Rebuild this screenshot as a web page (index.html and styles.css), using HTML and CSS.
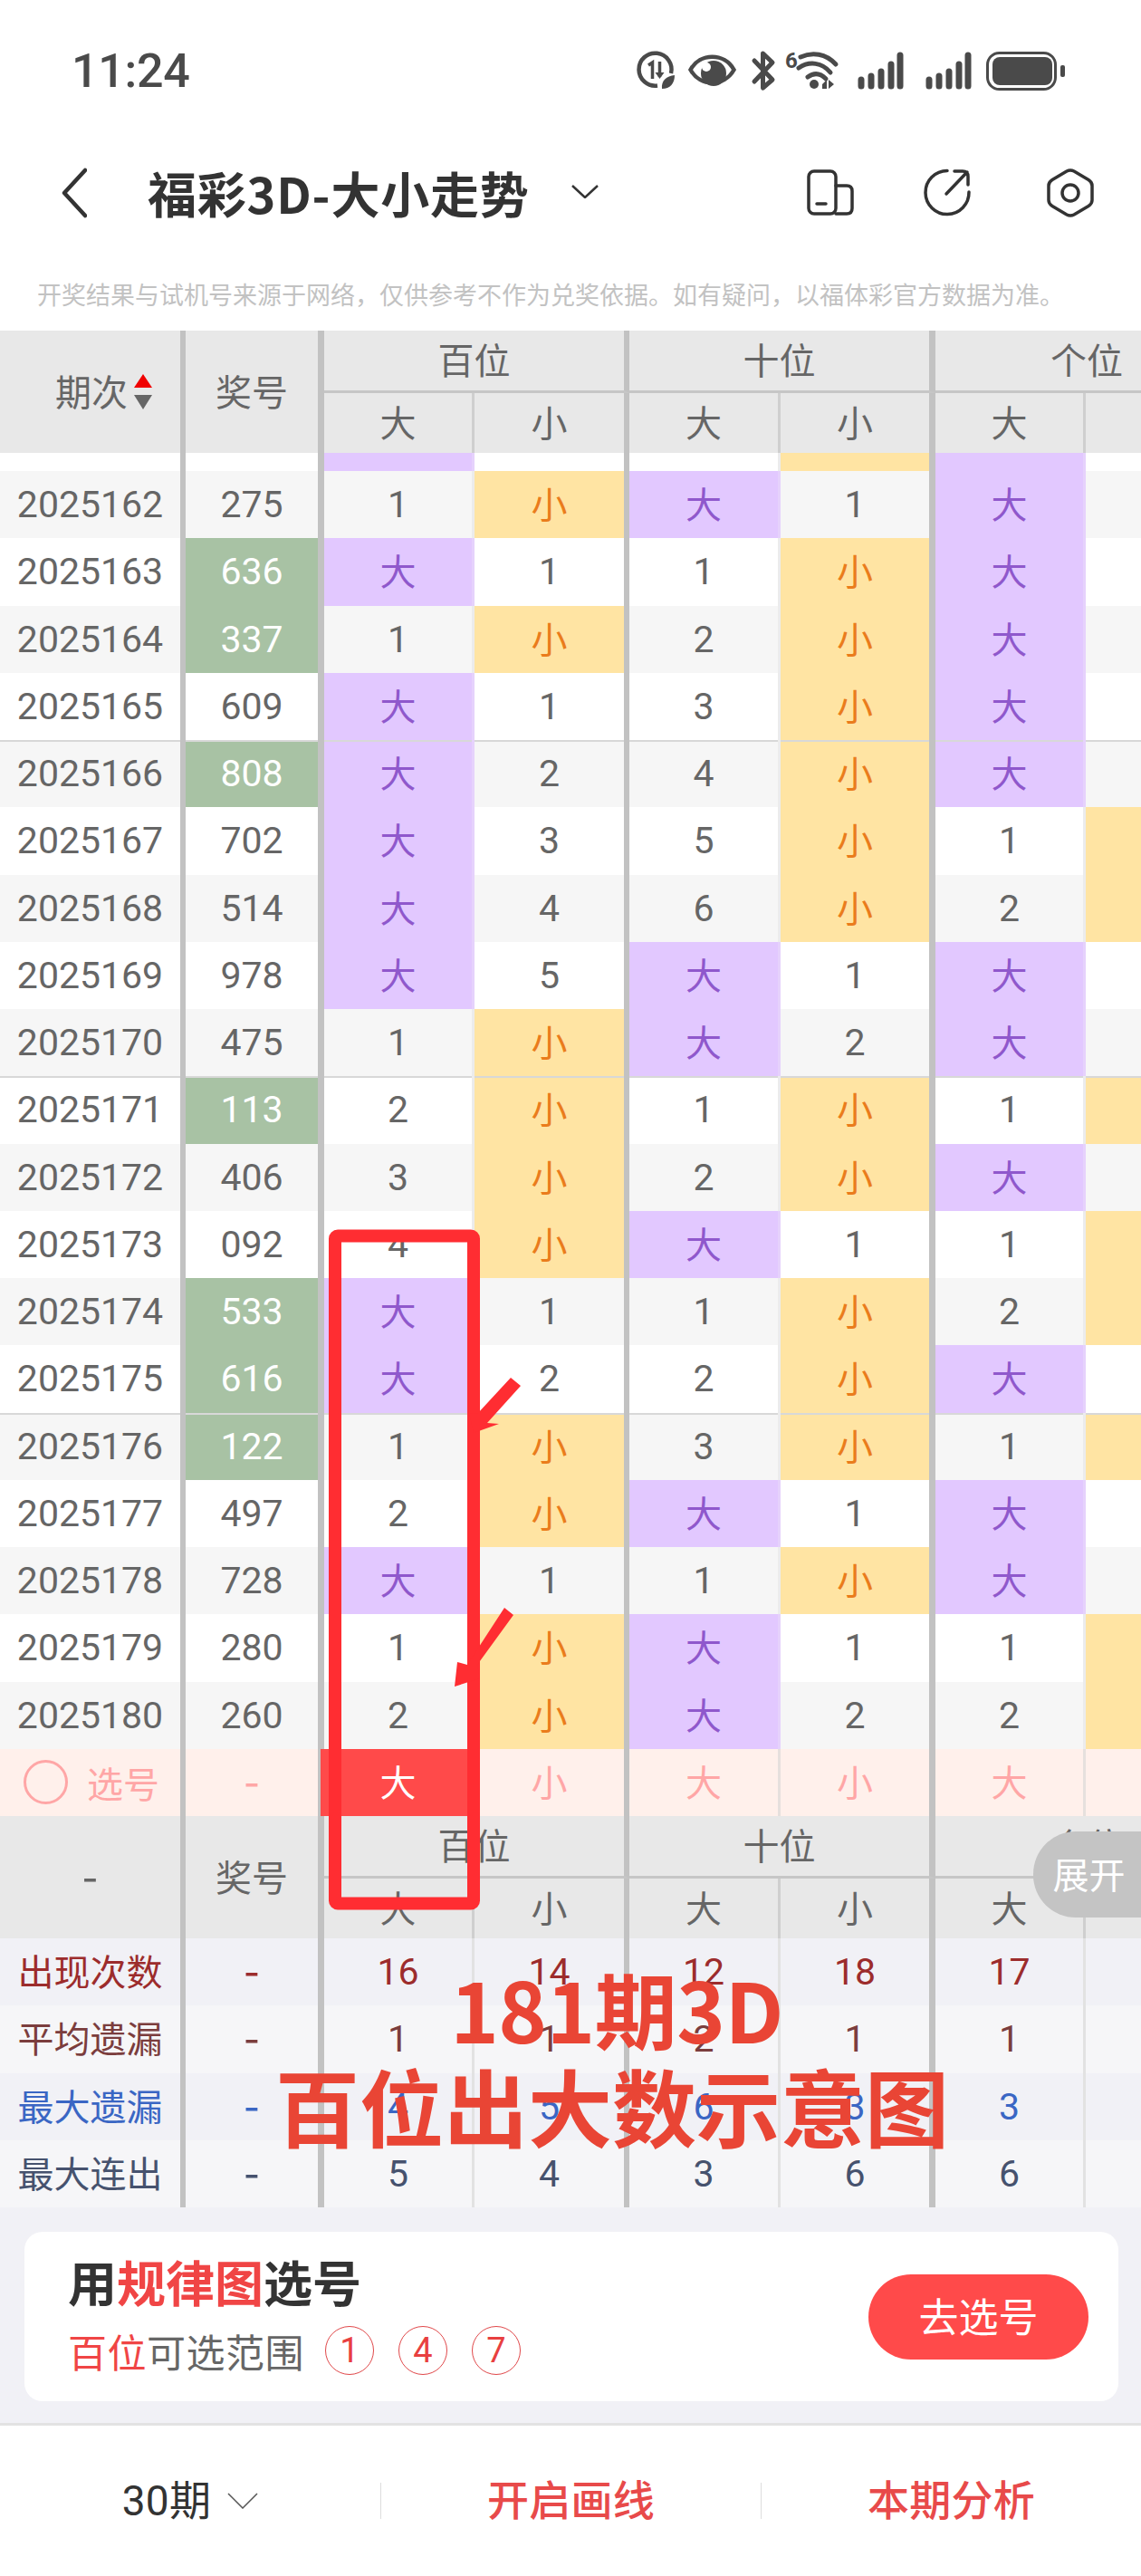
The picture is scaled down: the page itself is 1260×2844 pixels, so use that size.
FILE: index.html
```html
<!DOCTYPE html>
<html lang="zh-CN">
<head>
<meta charset="utf-8">
<title>福彩3D-大小走势</title>
<link rel="stylesheet" href="styles.css">
</head>
<body>
<div class="page">
  <div class="status">
    <span class="time">11:24</span>
    <div class="status-icons">
      <svg width="55" height="55" viewBox="700 50 55 55" class="ic-fill"><path d="M741 81A18 18 0 1 0 726 94.500" fill="none" stroke="#4a4a4a" stroke-width="4.500"/><path d="M716 72l4.500-3V87M728.500 68V85" fill="none" stroke="#4a4a4a" stroke-width="3.500"/><path d="M723.500 80l5 7 5-7z"/><path d="M731 98C730 89 736 84 745 83C745 92 740 98 731 98Z"/></svg>
      <svg width="70" height="55" viewBox="755 50 70 55" class="ic-fill"><path d="M762.500 77C773 58 800 58 810.500 77C800 96 773 96 762.500 77Z" fill="none" stroke="#4a4a4a" stroke-width="4.500"/><circle cx="788" cy="81" r="14"/><circle cx="780" cy="74" r="5" fill="#fff"/></svg>
      <svg width="37" height="55" viewBox="825 50 37 55"><path d="M833 67L853 88L842.500 97V59L853 69L833 90" fill="none" stroke="#4a4a4a" stroke-width="5" stroke-linecap="round" stroke-linejoin="round"/></svg>
      <svg width="78" height="55" viewBox="862 50 78 55" class="ic-fill"><text x="867" y="75" class="wifi-six">6</text><path d="M884 63C897 57 912 59 923 71M882 75C894 67 908 69 917 80M892 85C899 80 906 81 912 87" fill="none" stroke="#4a4a4a" stroke-width="5" stroke-linecap="round"/><circle cx="899" cy="93" r="5"/><path d="M908 98V93L913 88V98ZM915 88V98L921 93Z"/></svg>
      <svg width="75" height="55" viewBox="940 50 75 55"><path d="M951 88V95M962 84V95M973 79V95M984 71V95M994 61V95" stroke="#4a4a4a" stroke-width="7" stroke-linecap="round"/></svg>
      <svg width="70" height="55" viewBox="1015 50 70 55"><path d="M1026 88V95M1037 84V95M1048 79V95M1059 71V95M1069 61V95" stroke="#4a4a4a" stroke-width="7" stroke-linecap="round"/></svg>
      <svg width="95" height="55" viewBox="1085 50 95 55" class="ic-fill"><rect x="1090.500" y="58.500" width="75" height="40" rx="13" fill="none" stroke="#4a4a4a" stroke-width="3"/><rect x="1096" y="63" width="66" height="31" rx="8"/><rect x="1171" y="72" width="5" height="13" rx="2"/></svg>
    </div>
  </div>

  <div class="nav">
    <svg class="back" width="28" height="56" viewBox="0 0 28 56"><path d="M26 3L3 28L26 53" fill="none" stroke="#333" stroke-width="4.500" stroke-linecap="round" stroke-linejoin="round"/></svg>
    <h1 class="title">福彩3D-大小走势</h1>
    <svg class="caret" width="30" height="15" viewBox="0 0 30 15"><path d="M1 1L15 14L29 1" fill="none" stroke="#333" stroke-width="2.500"/></svg>
    <div class="nav-actions">
      <svg width="52" height="52" viewBox="891 187 52 52" class="ic-line"><rect x="893" y="189" width="30" height="47" rx="6"/><path d="M923 205H935Q941 205 941 211V230Q941 236 935 236H923"/><path d="M902 225H912"/></svg>
      <svg width="59" height="54" viewBox="1020 186 59 54" class="ic-line"><path d="M1046 188.500A24 24 0 1 0 1070 212"/><path d="M1045 214L1068 190M1054 189H1063Q1069 189 1069 195V204"/></svg>
      <svg width="52" height="56" viewBox="1156 184 52 56" class="ic-line"><path d="M1178 188Q1182 186 1186 188L1202 197.500Q1206 200 1206 204V220Q1206 224 1202 226.500L1186 236Q1182 238 1178 236L1162 226.500Q1158 224 1158 220V204Q1158 200 1162 197.500Z"/><circle cx="1182" cy="212" r="9"/></svg>
    </div>
  </div>

  <p class="notice">开奖结果与试机号来源于网络，仅供参考不作为兑奖依据。如有疑问，以福体彩官方数据为准。</p>

  <div class="chart">
    <div class="head">
      <div class="hc tall tk6 sort-cell"><span>期次</span><svg width="20" height="39" viewBox="0 0 20 39"><path d="M10 0L20 15H0Z" fill="#f00000"/><path d="M0 23H20L10 39Z" fill="#666"/></svg></div>
      <div class="hc tall tk7">奖号</div>
      <div class="hc grp tk6">百位</div>
      <div class="hc grp tk7">十位</div>
      <div class="hc grp tn">个位</div>
      <div class="hc tn">大</div><div class="hc tk6">小</div>
      <div class="hc tn">大</div><div class="hc tk7">小</div>
      <div class="hc tn">大</div><div class="hc tn">小</div>
    </div>

    <div class="row peek"><span></span><span></span><span class="b">大</span><span></span><span></span><span class="s">小</span><span class="b">大</span><span></span></div>
    <div class="row alt"><span>2025162</span><span>275</span><span>1</span><span class="s">小</span><span class="b">大</span><span>1</span><span class="b">大</span><span></span></div>
    <div class="row"><span>2025163</span><span class="g">636</span><span class="b">大</span><span>1</span><span>1</span><span class="s">小</span><span class="b">大</span><span></span></div>
    <div class="row alt"><span>2025164</span><span class="g">337</span><span>1</span><span class="s">小</span><span>2</span><span class="s">小</span><span class="b">大</span><span></span></div>
    <div class="row"><span>2025165</span><span>609</span><span class="b">大</span><span>1</span><span>3</span><span class="s">小</span><span class="b">大</span><span></span></div>
    <div class="row alt sep"><span>2025166</span><span class="g">808</span><span class="b">大</span><span>2</span><span>4</span><span class="s">小</span><span class="b">大</span><span></span></div>
    <div class="row"><span>2025167</span><span>702</span><span class="b">大</span><span>3</span><span>5</span><span class="s">小</span><span>1</span><span class="s">小</span></div>
    <div class="row alt"><span>2025168</span><span>514</span><span class="b">大</span><span>4</span><span>6</span><span class="s">小</span><span>2</span><span class="s">小</span></div>
    <div class="row"><span>2025169</span><span>978</span><span class="b">大</span><span>5</span><span class="b">大</span><span>1</span><span class="b">大</span><span></span></div>
    <div class="row alt"><span>2025170</span><span>475</span><span>1</span><span class="s">小</span><span class="b">大</span><span>2</span><span class="b">大</span><span></span></div>
    <div class="row sep"><span>2025171</span><span class="g">113</span><span>2</span><span class="s">小</span><span>1</span><span class="s">小</span><span>1</span><span class="s">小</span></div>
    <div class="row alt"><span>2025172</span><span>406</span><span>3</span><span class="s">小</span><span>2</span><span class="s">小</span><span class="b">大</span><span></span></div>
    <div class="row"><span>2025173</span><span>092</span><span>4</span><span class="s">小</span><span class="b">大</span><span>1</span><span>1</span><span class="s">小</span></div>
    <div class="row alt"><span>2025174</span><span class="g">533</span><span class="b">大</span><span>1</span><span>1</span><span class="s">小</span><span>2</span><span class="s">小</span></div>
    <div class="row"><span>2025175</span><span class="g">616</span><span class="b">大</span><span>2</span><span>2</span><span class="s">小</span><span class="b">大</span><span></span></div>
    <div class="row alt sep"><span>2025176</span><span class="g">122</span><span>1</span><span class="s">小</span><span>3</span><span class="s">小</span><span>1</span><span class="s">小</span></div>
    <div class="row"><span>2025177</span><span>497</span><span>2</span><span class="s">小</span><span class="b">大</span><span>1</span><span class="b">大</span><span></span></div>
    <div class="row alt"><span>2025178</span><span>728</span><span class="b">大</span><span>1</span><span>1</span><span class="s">小</span><span class="b">大</span><span></span></div>
    <div class="row"><span>2025179</span><span>280</span><span>1</span><span class="s">小</span><span class="b">大</span><span>1</span><span>1</span><span class="s">小</span></div>
    <div class="row alt"><span>2025180</span><span>260</span><span>2</span><span class="s">小</span><span class="b">大</span><span>2</span><span>2</span><span class="s">小</span></div>

    <div class="row pick-row"><span class="pick-cell"><i class="radio"></i>选号</span><span class="dash">-</span><span class="on">大</span><span class="cj">小</span><span class="cj">大</span><span class="cj">小</span><span class="cj">大</span><span class="cj">小</span></div>

    <div class="head foot">
      <div class="hc tall tk6 dash">-</div>
      <div class="hc tall tk7">奖号</div>
      <div class="hc grp tk6">百位</div>
      <div class="hc grp tk7">十位</div>
      <div class="hc grp tn">个位</div>
      <div class="hc tn">大</div><div class="hc tk6">小</div>
      <div class="hc tn">大</div><div class="hc tk7">小</div>
      <div class="hc tn">大</div><div class="hc tn">小</div>
    </div>
    <div class="expand">展开</div>

    <div class="row stat st1"><span class="cj">出现次数</span><span class="dash">-</span><span>16</span><span>14</span><span>12</span><span>18</span><span>17</span><span></span></div>
    <div class="row stat st2"><span class="cj">平均遗漏</span><span class="dash">-</span><span>1</span><span>1</span><span>2</span><span>1</span><span>1</span><span></span></div>
    <div class="row stat st3"><span class="cj">最大遗漏</span><span class="dash">-</span><span>4</span><span>5</span><span>6</span><span>3</span><span>3</span><span></span></div>
    <div class="row stat st4"><span class="cj">最大连出</span><span class="dash">-</span><span>5</span><span>4</span><span>3</span><span>6</span><span>6</span><span></span></div>
  </div>

  <div class="tray">
    <div class="card">
      <div class="card-main">
        <div class="card-title">用<em>规律图</em>选号</div>
        <div class="card-sub"><span><em>百位</em>可选范围</span><b class="ball">1</b><b class="ball">4</b><b class="ball">7</b></div>
      </div>
      <div class="go">去选号</div>
    </div>
  </div>

  <div class="tabs">
    <div class="tab tab-period">30期<svg width="34" height="18" viewBox="0 0 34 18"><path d="M1 1L17 17L33 1" fill="none" stroke="#555" stroke-width="1.500"/></svg></div>
    <div class="tab tab-red">开启画线</div>
    <div class="tab tab-red">本期分析</div>
  </div>

  <svg class="marks" width="1260" height="2844" viewBox="0 0 1260 2844">
    <rect x="370" y="1364.500" width="153" height="737" rx="3" fill="none" stroke="#ff2d32" stroke-width="14"/>
    <path d="M564 1521L575 1530L538 1571L551 1572L523 1582L518 1560L527 1561Z" fill="#ff2d32"/>
    <path d="M557 1775L567 1783L527 1838L530 1853L502 1862L505 1835L516 1838Z" fill="#ff2d32"/>
  </svg>

  <div class="note"><span class="note-a">181期3D</span><span class="note-b">百位出大数示意图</span></div>
</div>
</body>
</html>
```
FILE: styles.css
```css
* { box-sizing: border-box; }
html, body { margin: 0; padding: 0; }
body {
  width: 1260px;
  height: 2844px;
  overflow: hidden;
  background: #fff;
  font-family: Roboto, "Noto Sans CJK SC", sans-serif;
  color: #666;
}
.page { position: relative; width: 1260px; height: 2844px; overflow: hidden; display: flex; flex-direction: column; }

/* status bar */
.status { height: 150px; padding: 50px 80px 0 79px; display: flex; justify-content: space-between; align-items: flex-start; }
.time { font-size: 52px; line-height: 58px; font-weight: 500; color: #4a4a4a; letter-spacing: -0.3px; }
.status-icons { display: flex; }
.status-icons svg { display: block; }
.ic-fill { fill: #4a4a4a; }
.wifi-six { font-family: Roboto, sans-serif; font-size: 24px; font-weight: 700; fill: #4a4a4a; }

/* nav */
.nav { height: 125px; padding: 0 52px 0 68px; display: flex; align-items: center; }
.back { margin-right: 67px; }
.title { margin: 0; font-size: 54px; line-height: 62px; font-weight: 700; color: #333; font-family: "Noto Sans CJK SC", sans-serif; letter-spacing: 0.8px; }
.caret { margin-left: 46px; margin-top: -2px; }
.nav-actions { margin-left: auto; display: flex; align-items: center; gap: 77px; }
.nav-actions svg { display: block; }
.ic-line { fill: none; stroke: #333; stroke-width: 3.5; stroke-linecap: round; stroke-linejoin: round; }

.notice { margin: 0; height: 90px; padding: 0 0 0 41px; font-size: 27px; line-height: 100px; color: #c2c2c2; white-space: nowrap; font-family: "Noto Sans CJK SC", sans-serif; }

/* chart */
.chart { position: relative; width: 1260px; overflow: hidden; flex: none; }
.head, .row { display: grid; grid-template-columns: 205px 153px 166px 171px 167px 171px 166px 171px; width: 1370px; }
.head { grid-template-rows: 69px 66px; height: 135px; background: #e8e8e8; }
.hc { display: flex; align-items: center; justify-content: center; font-size: 40px; color: #666; padding-bottom: 4px; }
.tall { grid-row: span 2; }
.grp { grid-column: span 2; border-bottom: 3px solid #c6c6c6; }
.tk6 { border-right: 6px solid #c2c2c2; }
.tk7 { border-right: 7px solid #c2c2c2; }
.tn { border-right: 3px solid #cfcfcf; }
.sort-cell { justify-content: flex-start; padding-left: 61px; gap: 7px; }
.sort-cell svg { margin-top: 4px; }

.row { height: 74.26px; background: #fff; font-size: 41px; color: #666; }
.row.alt { background: #f6f6f6; }
.row > span { display: flex; align-items: center; justify-content: center; overflow: hidden; border-right: 3px solid #ececec; white-space: nowrap; }
.row > span:nth-child(1), .row > span:nth-child(4) { border-right: 6px solid #c2c2c2; }
.row > span:nth-child(2), .row > span:nth-child(6) { border-right: 7px solid #c2c2c2; }
.row > .b { background: #e2c8ff; color: #8f58cc; border-right-color: #e6d2fc; padding-bottom: 4px; font-size: 40px; }
.row > .s { background: #ffe4a3; color: #ea7c1c; padding-bottom: 4px; font-size: 40px; }
.row > .g { background: #a8c2a4; color: #fff; }
.row > .cj { padding-bottom: 4px; font-size: 40px; }
.row.sep > span { box-shadow: inset 0 2px 0 #d8d8d8; }
.row.peek { height: 20px; }
.row.peek > span { align-items: flex-end; line-height: 74px; padding-bottom: 0; }
.row > .dash, .hc.dash { font-family: "Noto Sans CJK SC", sans-serif; font-size: 50px; font-weight: 400; padding-bottom: 10px; }

.pick-row { background: #fff0eb; color: #ffa6a6; }
.pick-row > span { border-right-color: #e6e0dd; }
.row > .pick-cell { justify-content: flex-start; padding-left: 26px; gap: 21px; font-size: 40px; }
.radio { width: 49px; height: 49px; border: 3px solid #ffa6a6; border-radius: 50%; flex: none; }
.row > .on { background: #ff4a4a; color: #fff; box-shadow: -4px 0 0 #ff4a4a; border-right-color: #f4ebe8; font-size: 40px; padding-bottom: 4px; }

.expand { position: absolute; right: 0; top: 1657px; width: 119px; height: 95px; display: flex; align-items: center; justify-content: center; padding: 0 0 4px 4px; background: #c4c4c4; color: #fff; font-size: 40px; border-radius: 47px 0 0 47px; }

.stat > span { border-right-color: #e2e2e2; }
.st1, .st3 { background: #f1f1f6; }
.st2, .st4 { background: #f6f6f8; }
.st1 { color: #9c2c2c; }
.st2 { color: #7b3d3d; }
.st3 { color: #3a66c4; }
.st4 { color: #46526e; }

/* card */
.tray { flex: none; height: 241px; background: #f1f1f6; padding: 27px 25px 27px 27px; border-bottom: 3px solid #e2e2e2; }
.card { height: 187px; background: #fff; border-radius: 20px; padding: 0 33px 0 48px; display: flex; align-items: center; justify-content: space-between; }
.card em { font-style: normal; color: #f04545; }
.card-title { font-size: 54px; line-height: 60px; font-weight: 700; color: #333; }
.card-sub { margin-top: 14px; display: flex; align-items: center; font-size: 43px; line-height: 54px; color: #666; font-family: "Noto Sans CJK SC", sans-serif; letter-spacing: 0.5px; }
.ball { width: 54px; height: 54px; margin-left: 27px; border: 1.5px solid #e0484a; border-radius: 50%; display: flex; align-items: center; justify-content: center; font-family: Roboto, sans-serif; font-size: 38px; font-weight: 400; color: #e84040; letter-spacing: 0; }
.ball:first-of-type { margin-left: 23px; }
.go { width: 243px; height: 94px; border-radius: 47px; background: #ff4a4a; color: #fff; font-size: 44px; display: flex; align-items: center; justify-content: center; padding-bottom: 3px; }

/* tabs */
.tabs { flex: 1; display: flex; align-items: center; background: #fff; }
.tab { width: 421px; height: 40px; display: flex; align-items: center; justify-content: center; font-size: 46px; line-height: 40px; letter-spacing: 0.3px; }
.tab + .tab { border-left: 1px solid #ddd; }
.tab-period { color: #333; gap: 18px; }
.tab-red { color: #e84a4a; font-weight: 500; }

/* hand-drawn annotation layered over the screenshot */
.marks { position: absolute; left: 0; top: 0; pointer-events: none; }
.note { position: absolute; left: 308px; top: 2163px; width: 736px; color: #e94535; line-height: 107px; font-weight: 700; text-align: center; font-family: "Noto Sans CJK SC", sans-serif; }
.note span { display: block; white-space: nowrap; }
.note-a { padding-left: 10px; font-size: 91px; letter-spacing: -0.5px; }
.note-b { font-size: 93px; margin: 0 -10px; }
```
